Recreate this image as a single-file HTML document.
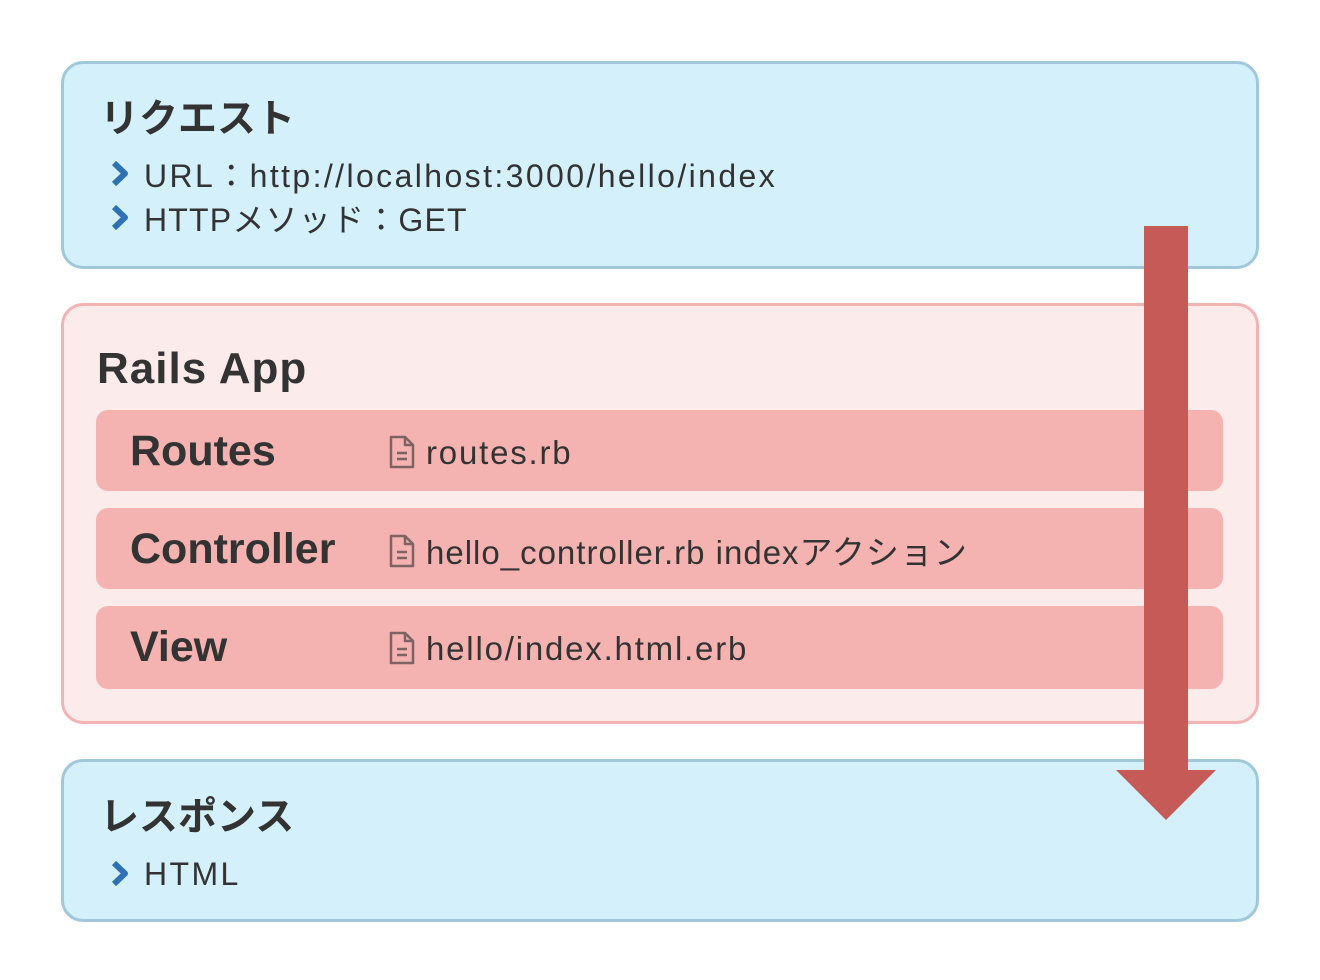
<!DOCTYPE html>
<html><head><meta charset="utf-8"><style>
body{margin:0;width:1320px;height:980px;background:#fff;position:relative;font-family:"Liberation Sans","Noto Sans CJK JP",sans-serif;color:#333;overflow:hidden}
.box{position:absolute;left:61px;width:1198px;border:3px solid #a0c8da;background:#d4f1fb;border-radius:22px;box-sizing:border-box}
.h{position:absolute;font-weight:bold;white-space:nowrap}
.li{position:absolute;left:80px;font-size:32px;white-space:nowrap;letter-spacing:2.4px}
.li svg{position:absolute;left:-34px;top:9px}
.row{position:absolute;left:96px;width:1127px;height:81px;background:#f4b3b1;border-radius:12px}
.row .t{position:absolute;left:34px;top:17px;font-size:43px;font-weight:bold}
.row .f{position:absolute;left:330px;top:24px;font-size:33px;white-space:nowrap;letter-spacing:1.8px}
.row .f svg{position:absolute;left:-38px;top:0px}
</style></head><body>
<div class="box" style="top:61px;height:208px">
<div class="h" style="left:36px;top:24px;font-size:39px">リクエスト</div>
<div class="li" style="top:87px"><svg width="20" height="28" viewBox="0 0 20 28"><path d="M4 3 L15 13.5 L4 24" stroke="#2e72b3" stroke-width="6" fill="none" stroke-linejoin="round"/></svg>URL：http://localhost:3000/hello/index</div>
<div class="li" style="top:131px;letter-spacing:1.2px"><svg width="20" height="28" viewBox="0 0 20 28"><path d="M4 3 L15 13.5 L4 24" stroke="#2e72b3" stroke-width="6" fill="none" stroke-linejoin="round"/></svg>HTTPメソッド：GET</div>
</div>
<div class="box" style="top:303px;height:421px;border-color:#f2b3b3;background:#fcebeb">
<div class="h" style="left:33px;top:38px;font-size:44px;letter-spacing:1px">Rails App</div>
</div>
<div class="row" style="top:410px"><div class="t">Routes</div><div class="f"><svg width="28" height="36" viewBox="0 0 28 36"><path d="M3 3 H17 L25 11 V33 H3 Z M17 3 V11 H25" stroke="#7d6363" stroke-width="2.5" fill="none" stroke-linejoin="round"/><path d="M9 19 H19 M9 25 H19" stroke="#7d6363" stroke-width="2.5"/></svg>routes.rb</div></div>
<div class="row" style="top:508px"><div class="t">Controller</div><div class="f" style="top:18px;letter-spacing:1px"><svg width="28" height="36" viewBox="0 0 28 36" style="top:7px"><path d="M3 3 H17 L25 11 V33 H3 Z M17 3 V11 H25" stroke="#7d6363" stroke-width="2.5" fill="none" stroke-linejoin="round"/><path d="M9 19 H19 M9 25 H19" stroke="#7d6363" stroke-width="2.5"/></svg>hello_controller.rb indexアクション</div></div>
<div class="row" style="top:606px;height:83px"><div class="t">View</div><div class="f"><svg width="28" height="36" viewBox="0 0 28 36"><path d="M3 3 H17 L25 11 V33 H3 Z M17 3 V11 H25" stroke="#7d6363" stroke-width="2.5" fill="none" stroke-linejoin="round"/><path d="M9 19 H19 M9 25 H19" stroke="#7d6363" stroke-width="2.5"/></svg>hello/index.html.erb</div></div>
<div class="box" style="top:759px;height:163px">
<div class="h" style="left:36px;top:24px;font-size:39px">レスポンス</div>
<div class="li" style="top:94px"><svg width="20" height="28" viewBox="0 0 20 28" style="top:4px"><path d="M4 3 L15 13.5 L4 24" stroke="#2e72b3" stroke-width="6" fill="none" stroke-linejoin="round"/></svg>HTML</div>
</div>
<svg style="position:absolute;left:0;top:0" width="1320" height="980"><path d="M1144 226 H1188 V770 H1216 L1166 820 L1116 770 H1144 Z" fill="#c55a57"/></svg>
</body></html>
